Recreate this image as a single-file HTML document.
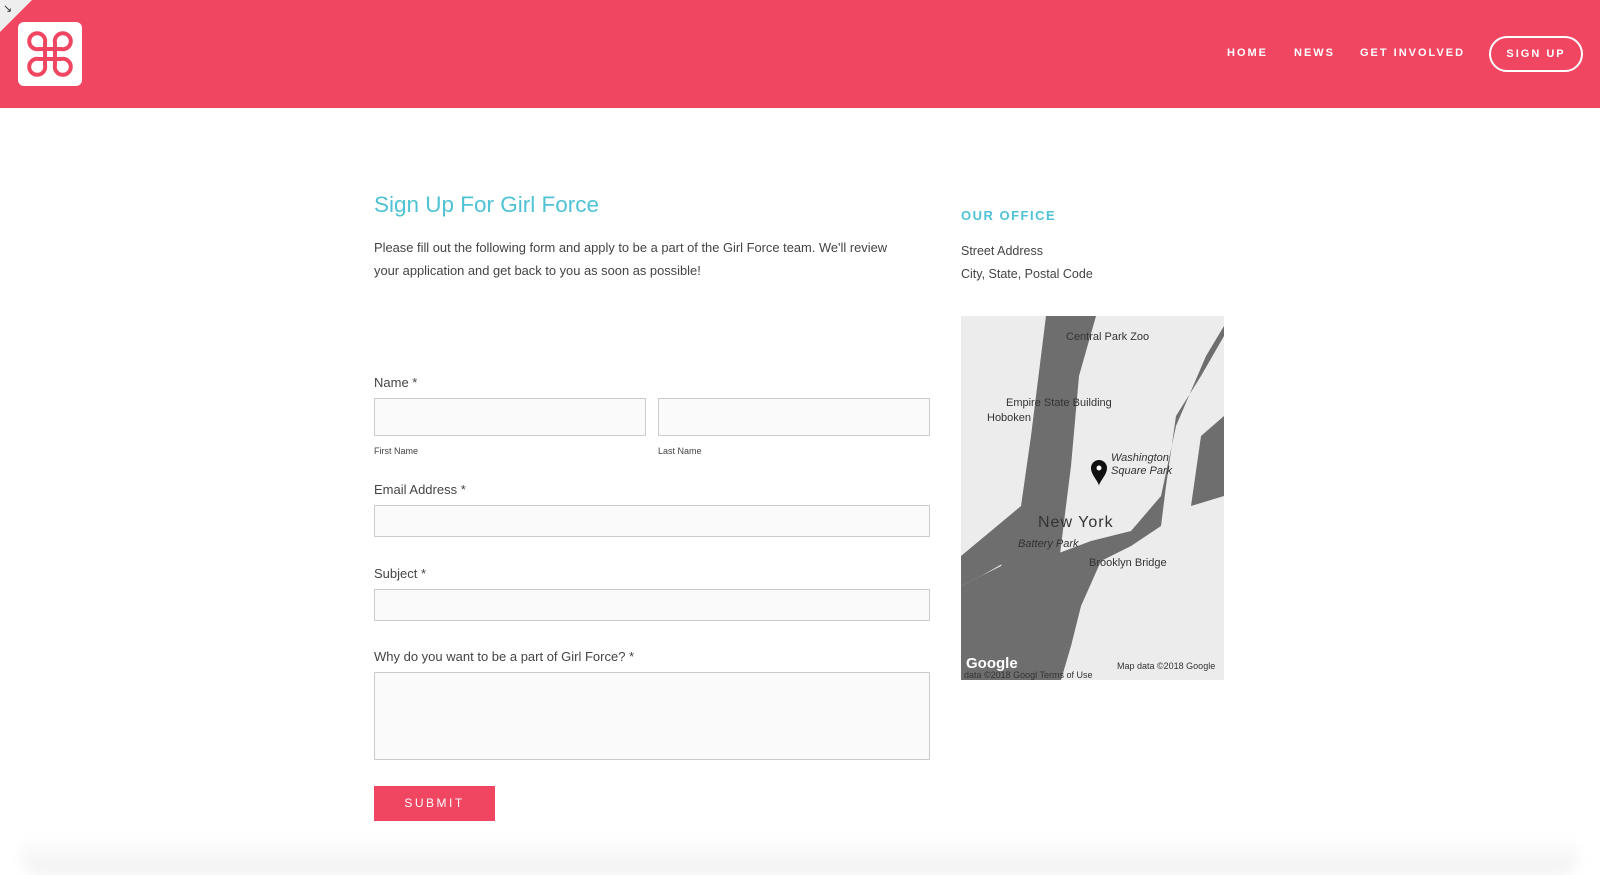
<!DOCTYPE html>
<html><head><meta charset="utf-8"><style>
*{margin:0;padding:0;box-sizing:border-box}
body{width:1600px;height:861px;background:#fff;font-family:"Liberation Sans",sans-serif;position:relative;overflow:hidden;color:#444}
.hdr{position:absolute;left:0;top:0;width:1600px;height:108px;background:#f04661}
.corner{position:absolute;left:0;top:0;width:0;height:0;border-top:32px solid #eee;border-right:32px solid transparent}
.logo{position:absolute;left:18px;top:22px;width:64px;height:64px;background:#fff;border-radius:6px}
.nav{position:absolute;top:47px;font-size:11px;font-weight:bold;letter-spacing:2px;color:#fff}
.btn{position:absolute;left:1489px;top:36px;width:94px;height:36px;border:2px solid #fff;border-radius:18px;color:#fff;font-size:11px;font-weight:bold;letter-spacing:2px;text-align:center;line-height:32px}
.a{position:absolute;white-space:nowrap}
h1{position:absolute;left:374px;top:192px;font-size:22.5px;font-weight:normal;color:#4fc3d5}
.p{left:374px;font-size:12.9px;color:#444}
.lbl{left:374px;font-size:13px;color:#444}
.sm{font-size:9px;color:#444}
.in{position:absolute;background:#fafafa;border:1px solid #ccc}
.sub{position:absolute;left:374px;top:786px;width:121px;height:35px;background:#f04661;color:#fff;font-size:12px;letter-spacing:2.5px;text-align:center;line-height:35px}
.shadow{position:absolute;left:20px;top:835px;width:1560px;height:40px;background:linear-gradient(#fff,#f1f1f1);border-radius:20px;filter:blur(6px)}
</style></head><body>
<div class="hdr">
<div class="corner"></div>
<div class="a" style="left:3px;top:2px;font-size:11px;color:#333">↘</div>
<div class="logo"><svg width="64" height="64" viewBox="0 0 64 64"><path d="M27 27 H37 V37 H27 Z M27 27 V21 A8 8 0 1 0 21 27 H27 M37 27 V21 A8 8 0 1 1 43 27 H37 M27 37 V43 A8 8 0 1 1 21 37 H27 M37 37 V43 A8 8 0 1 0 43 37 H37" fill="none" stroke="#f04661" stroke-width="4"/></svg></div>
<div class="nav" style="left:1227px">HOME</div>
<div class="nav" style="left:1294px">NEWS</div>
<div class="nav" style="left:1360px">GET INVOLVED</div>
<div class="btn">SIGN UP</div>
</div>
<h1>Sign Up For Girl Force</h1>
<div class="a p" style="top:240px">Please fill out the following form and apply to be a part of the Girl Force team. We'll review</div>
<div class="a p" style="top:263px">your application and get back to you as soon as possible!</div>
<div class="a lbl" style="top:375px">Name *</div>
<div class="in" style="left:374px;top:398px;width:272px;height:38px"></div>
<div class="in" style="left:658px;top:398px;width:272px;height:38px"></div>
<div class="a sm" style="left:374px;top:446px">First Name</div>
<div class="a sm" style="left:658px;top:446px">Last Name</div>
<div class="a lbl" style="top:482px">Email Address *</div>
<div class="in" style="left:374px;top:505px;width:556px;height:32px"></div>
<div class="a lbl" style="top:566px">Subject *</div>
<div class="in" style="left:374px;top:589px;width:556px;height:32px"></div>
<div class="a lbl" style="top:649px">Why do you want to be a part of Girl Force? *</div>
<div class="in" style="left:374px;top:672px;width:556px;height:88px"></div>
<div class="sub">SUBMIT</div>
<div class="a" style="left:961px;top:208px;font-size:13px;font-weight:bold;letter-spacing:1.5px;color:#4fc3d5">OUR OFFICE</div>
<div class="a" style="left:961px;top:244px;font-size:12.5px">Street Address</div>
<div class="a" style="left:961px;top:267px;font-size:12.5px">City, State, Postal Code</div>
<svg class="a" style="left:961px;top:316px" width="263" height="364" viewBox="0 0 263 364">
<rect width="263" height="364" fill="#ececec"/>
<path d="M85 0 L135 0 L118 60 L110 150 L100 230 L92 300 L80 364 L0 364 L0 270 L40 250 L60 190 L70 120 Z" fill="#6e6e6e"/>
<path d="M263 20 L240 60 L215 100 L205 170 L200 210 L170 230 L140 245 L120 290 L110 330 L100 364 L70 364 L75 300 L90 240 L130 225 L170 215 L200 180 L215 110 L245 40 L263 10 Z" fill="#6e6e6e"/>
<path d="M263 100 L240 120 L230 190 L263 180 Z" fill="#6e6e6e"/>
<path d="M0 240 L60 190 L55 240 L20 260 L0 270Z" fill="#6e6e6e"/>
<g fill="#333" font-family="Liberation Sans" font-size="11">
<text x="105" y="24">Central Park Zoo</text>
<text x="45" y="90">Empire State Building</text>
<text x="26" y="105">Hoboken</text>
<text x="150" y="145" font-style="italic">Washington</text>
<text x="150" y="158" font-style="italic">Square Park</text>
<text x="77" y="211" font-size="16" letter-spacing="1">New York</text>
<text x="57" y="231" font-style="italic">Battery Park</text>
<text x="128" y="250">Brooklyn Bridge</text>
<text x="156" y="353" font-size="9">Map data ©2018 Google</text>
<text x="3" y="362" font-size="9">data ©2018 Googl  Terms of Use</text>
</g>
<text x="5" y="352" fill="#fff" font-family="Liberation Sans" font-size="15" font-weight="bold">Google</text>
<path d="M130 152 a8 8 0 0 1 16 0 c0 7 -8 14 -8 18 c0 -4 -8 -11 -8 -18z" fill="#111"/><circle cx="138" cy="152" r="2.5" fill="#fff"/>
</svg>
<div class="shadow"></div>
</body></html>
